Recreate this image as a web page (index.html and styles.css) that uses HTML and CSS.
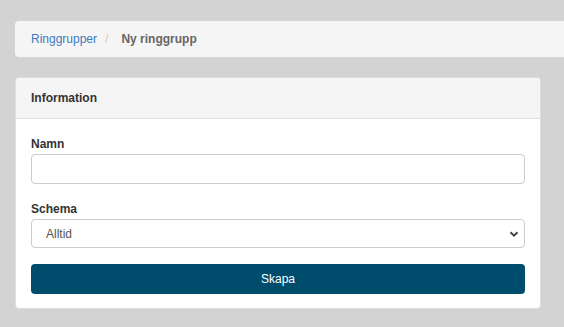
FILE: index.html
```html
<!DOCTYPE html>
<html>
<head>
<meta name="viewport" content="width=device-width, initial-scale=1">
<title>Ny ringgrupp</title>
<link rel="stylesheet" href="styles.css">
</head>
<body>

<div class="page">
    <ol class="breadcrumb">
        <li><a href="#">Ringgrupper</a></li>
        <li class="sep">/</li>
        <li class="active">Ny ringgrupp</li>
    </ol>

    <div class="card">
        <div class="card-header">Information</div>
        <form class="card-body">
            <label for="name">Namn</label>
            <input type="text" id="name" name="name">

            <label for="schedule" class="spaced">Schema</label>
            <div class="select-wrap">
                <select id="schedule" name="schedule">
                    <option>Alltid</option>
                </select>
                <svg class="chevron" width="10" height="8" viewBox="0 0 10 8">
                    <path d="M1.5 2.2 L5 5.6 L8.5 2.2" fill="none" stroke="#444" stroke-width="2"/>
                </svg>
            </div>

            <button type="submit">Skapa</button>
        </form>
    </div>
</div>

</body>
</html>
```

FILE: styles.css
```css
body {
    margin: 0;
    background-color: #d3d3d3;
    font-family: "Liberation Sans", Arial, Helvetica, sans-serif;
    font-size: 12px;
    color: #333;
}

.page {
    padding: 21px 23px 0 15px;
}

/* Breadcrumb */
.breadcrumb {
    list-style: none;
    margin: 0 -23px 0 0;
    padding: 0 16px;
    height: 36px;
    display: flex;
    align-items: center;
    background-color: #f5f5f5;
    border-radius: 4px 0 0 4px;
}

.breadcrumb a {
    color: #3a7bbf;
    text-decoration: none;
}

.breadcrumb .sep {
    color: #ccc;
    padding: 0 8px;
}

.breadcrumb .active {
    color: #666;
    font-weight: bold;
    padding-left: 5px;
}

/* Card */
.card {
    margin-top: 20px;
    background-color: #fff;
    border: 1px solid #ddd;
    border-radius: 4px;
}

.card-header {
    background-color: #f5f5f5;
    border-bottom: 1px solid #ddd;
    border-radius: 4px 4px 0 0;
    padding: 0 15px;
    height: 40px;
    line-height: 41px;
    font-weight: bold;
}

.card-body {
    padding: 16px 15px 14px;
    display: flex;
    flex-direction: column;
}

label {
    font-weight: bold;
    line-height: 18px;
    margin-bottom: 1px;
}

label.spaced {
    margin-top: 16px;
}

input[type=text], select {
    box-sizing: border-box;
    width: 100%;
    height: 30px;
    border: 1px solid #ccc;
    border-radius: 4px;
    background-color: #fff;
    font-family: inherit;
    font-size: 12px;
    color: #555;
    padding: 0 14px;
    margin: 0;
}

.select-wrap {
    position: relative;
}

select {
    appearance: none;
    -webkit-appearance: none;
    height: 29px;
}

.chevron {
    position: absolute;
    right: 6px;
    top: 11px;
    pointer-events: none;
}

button {
    margin-top: 16px;
    height: 30px;
    border: none;
    border-radius: 4px;
    background-color: #004c6d;
    color: #fff;
    font-family: inherit;
    font-size: 12px;
    cursor: pointer;
}
```
